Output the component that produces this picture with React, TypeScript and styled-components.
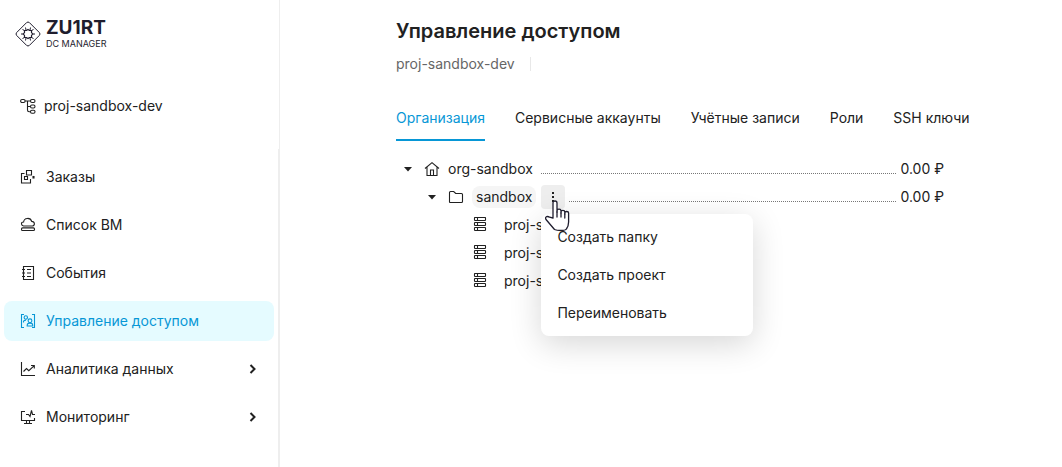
import React from "react";
import styled, { createGlobalStyle } from "styled-components";

const GlobalStyle = createGlobalStyle`
  * { box-sizing: border-box; }
  body {
    margin: 0;
    background: #fff;
    color: #212121;
    font-family: Inter, "Noto Sans", sans-serif;
    font-size: 14px;
    line-height: 20px;
  }
  button {
    margin: 0;
    padding: 0;
    border: 0;
    background: none;
    color: inherit;
    font: inherit;
    cursor: pointer;
  }
`;

const Page = styled.div`
  display: flex;
  min-height: 100vh;
`;

const Sidebar = styled.aside`
  display: flex;
  flex-direction: column;
  flex: 0 0 280px;
  border-right: 1px solid #eee;
`;

const Logo = styled.a`
  display: flex;
  align-items: center;
  gap: 5px;
  height: 68px;
  padding-left: 15px;
  color: #1f1d2e;
  text-decoration: none;
`;

const LogoText = styled.span`
  display: flex;
  flex-direction: column;
  gap: 2px;
`;

const LogoName = styled.span`
  font-size: 19px;
  font-weight: 700;
  line-height: 18px;
`;

const LogoProduct = styled.span`
  font-size: 9px;
  line-height: 10px;
`;

const ProjectButton = styled.button`
  display: flex;
  align-items: center;
  gap: 8px;
  height: 40px;
  margin: 18px 0 23px;
  padding: 0 20px;
`;

const Nav = styled.nav`
  display: flex;
  flex: 1;
  flex-direction: column;
  gap: 8px;
  padding: 8px 4px;
  border-right: 1px solid #eee;
`;

const NavLink = styled.a<{ $active?: boolean }>`
  display: flex;
  align-items: center;
  gap: 10px;
  height: 40px;
  padding: 0 16px;
  border-radius: 8px;
  background: ${(p) => (p.$active ? "#e5fbff" : "transparent")};
  color: ${(p) => (p.$active ? "#0797d6" : "inherit")};
  text-decoration: none;
`;

const NavLabel = styled.span`
  flex: 1;
`;

const Main = styled.main`
  flex: 1;
  min-width: 0;
  padding: 17px 90px 40px 116px;
`;

const Title = styled.h1`
  margin: 0;
  font-size: 20px;
  font-weight: 600;
  line-height: 28px;
`;

const Context = styled.div`
  display: flex;
  align-items: center;
  gap: 15px;
  margin-top: 9px;
  color: #666;
`;

const Divider = styled.span`
  width: 1px;
  height: 14px;
  background: #e8e8e8;
`;

const Tabs = styled.div`
  display: flex;
  gap: 30px;
  margin-top: 34px;
`;

const Tab = styled.button<{ $active?: boolean }>`
  height: 33px;
  padding-bottom: 11px;
  border-bottom: 2px solid ${(p) => (p.$active ? "#0797d6" : "transparent")};
  color: ${(p) => (p.$active ? "#0797d6" : "inherit")};
  white-space: nowrap;
`;

const Tree = styled.ul`
  max-width: 548px;
  margin: 14px 0 0;
  padding: 0;
  list-style: none;
`;

const Row = styled.li<{ $level: number }>`
  display: flex;
  align-items: center;
  height: 28px;
  padding-left: ${(p) => 4 + p.$level * 24}px;
`;

const Caret = styled.button`
  display: flex;
  margin-right: 8px;
`;

const NodeIcon = styled.span`
  display: flex;
  width: 24px;
  flex-shrink: 0;
`;

const NodeName = styled.span<{ $selected?: boolean }>`
  padding: ${(p) => (p.$selected ? "1px 4px" : "0")};
  border-radius: 8px;
  background: ${(p) => (p.$selected ? "#f5f5f5" : "transparent")};
  white-space: nowrap;
`;

const ProjectName = styled(NodeName)`
  margin-left: 8px;
`;

const Dots = styled.span`
  flex: 1;
  height: 9px;
  margin: 0 4px 0 8px;
  border-bottom: 1px dotted #777;
`;

const LeafDots = styled(Dots)`
  margin-left: 4px;
`;

const MenuAnchor = styled.span`
  position: relative;
  display: flex;
  margin-left: 5px;
`;

const MoreButton = styled.button`
  display: flex;
  align-items: center;
  justify-content: center;
  width: 24px;
  height: 24px;
  border-radius: 4px;
  background: #eee;
`;

const Menu = styled.div`
  position: absolute;
  z-index: 1;
  top: 29px;
  left: 0;
  display: flex;
  flex-direction: column;
  width: 212px;
  padding: 4px 0;
  border-radius: 8px;
  background: #fff;
  box-shadow: 0 8px 32px rgba(0, 0, 0, 0.16);
`;

const MenuItem = styled.button`
  height: 38px;
  padding: 0 16px;
  text-align: left;
`;

const Pointer = styled.svg`
  position: absolute;
  z-index: 2;
  top: 15px;
  left: 4px;
  pointer-events: none;
`;

const Icon = ({ children }: { children: React.ReactNode }) => (
  <svg width="16" height="16" viewBox="0 0 16 16" fill="none" stroke="currentColor" strokeWidth="1.1" aria-hidden="true">
    {children}
  </svg>
);

const OrdersIcon = () => (
  <Icon>
    <path d="M4.500 4.500H1.500v9.500h9V10M6.500 1.500h5v4.500h-5zM4.500 7.500h3v3h-3z" />
    <path d="M13 7.500h1v1.500h-1z" />
  </Icon>
);
const CloudIcon = () => (
  <Icon>
    <path d="M3.500 9C.7 8.500.8 5 3.600 5 4 .5 10.500.2 11.700 4.400 15 4.500 15.200 8.500 12.500 9zM2.500 10.900h11q1 0 1 1v.6q0 1-1 1h-11q-1 0-1-1v-.6q0-1 1-1z" />
  </Icon>
);
const EventsIcon = () => (
  <Icon>
    <path d="M3.500 1.500h10v13h-10zM2 4.500h3M2 8h3M2 11.500h3M7 4.500h4M7 8h4M7 11.500h4" />
  </Icon>
);
const AccessIcon = () => (
  <Icon>
    <path d="M4 1.500H1.500v13H4M12 1.500h2.500v13H12" />
    <circle cx="5.800" cy="4.500" r="1.700" />
    <circle cx="10" cy="7.800" r="1.900" />
    <path d="M3.500 9.500V8.400q.2-1.300 2.500-1.300M7.200 13v-1q.3-1.900 2.800-1.900t2.700 1.900v1z" />
  </Icon>
);
const AnalyticsIcon = () => (
  <Icon>
    <path d="M1.500 1v13.500H15M3.500 10.500l3-3 2.300 2.200L14 4.800M11 4.500h3.300v3" />
  </Icon>
);
const MonitorIcon = () => (
  <Icon>
    <path d="M5 2.500H1.500v9h13V9M6.500 11.500v3M9.500 11.500v3M4 14.500h8M6 5.500h2.500l1.500 2 1.500-6 1 4H15" />
  </Icon>
);
const HierarchyIcon = () => (
  <Icon>
    <rect x=".6" y="1.500" width="4.500" height="3" rx="1.400" />
    <rect x="10.500" y="1.500" width="4.500" height="3" rx="1.400" />
    <rect x="10.500" y="7" width="4.500" height="3" rx="1.400" />
    <rect x="10.500" y="12.200" width="4.500" height="3" rx="1.400" />
    <path d="M5 3h5.500M7.500 3v9q0 1.700 1.600 1.700h1.400M7.500 8.500h3" />
  </Icon>
);
const HomeIcon = () => (
  <Icon>
    <path d="M1 7.500 8 1.600l7 5.900M3 6v8.500h10V6M6.500 14.500V9h3v5.500" />
  </Icon>
);
const FolderIcon = () => (
  <Icon>
    <path d="M1.500 13V3.500q0-1 1-1h3.200l2 2h5.800q1 0 1 1v7q0 1-1 1H2q-.5 0-.5-.5z" />
  </Icon>
);
const ServerIcon = () => (
  <Icon>
    <rect x="2.500" y=".5" width="11" height="3" rx=".6" />
    <rect x="2.500" y="5.500" width="11" height="3" rx=".6" />
    <rect x="2.500" y="10.500" width="11" height="3" rx=".6" />
    <path d="M5.500.5v3M5.500 5.500v3M5.500 10.500v3" />
  </Icon>
);
const ChevronIcon = () => (
  <svg width="10" height="10" viewBox="0 0 10 10" fill="none" stroke="currentColor" strokeWidth="2" aria-hidden="true">
    <path d="m2.500 1 4 4-4 4" />
  </svg>
);
const CaretIcon = () => (
  <svg width="16" height="16" viewBox="0 0 16 16" fill="currentColor" aria-hidden="true">
    <path d="M4 6h8l-4 4.500z" />
  </svg>
);

const LogoMark = () => (
  <svg width="26" height="26" viewBox="0 0 26 26" fill="none" stroke="currentColor" aria-hidden="true">
    <path d="M11.600 1.600q1.400-1.200 2.800 0l10 10q1.200 1.400 0 2.800l-10 10q-1.400 1.200-2.800 0l-10-10q-1.200-1.400 0-2.800z" />
    <path d="m13 8.500 1.500 1h2v2l1.200 1.500-1.200 1.500v2h-2l-1.500 1-1.500-1h-2v-2L8.300 13l1.200-1.500v-2h2z" strokeWidth="1.200" />
    <path d="m9.500 9.500-2-1M16.500 9.500l2-1M9.500 16.500l-2 1M16.500 16.500l2 1M11 9l-.5-2.500M15 9l.5-2.500M11 17l-.5 2.500M15 17l.5 2.500M6 13h2M18 13h2" />
  </svg>
);

const navItems = [
  { label: "Заказы", icon: <OrdersIcon /> },
  { label: "Список ВМ", icon: <CloudIcon /> },
  { label: "События", icon: <EventsIcon /> },
  { label: "Управление доступом", icon: <AccessIcon />, active: true },
  { label: "Аналитика данных", icon: <AnalyticsIcon />, expandable: true },
  { label: "Мониторинг", icon: <MonitorIcon />, expandable: true },
];

const tabs = ["Организация", "Сервисные аккаунты", "Учётные записи", "Роли", "SSH ключи"];
const projects = [1, 2, 3];

export default function App() {
  return (
    <Page>
      <GlobalStyle />
      <Sidebar>
        <Logo href="#">
          <LogoMark />
          <LogoText>
            <LogoName>ZU1RT</LogoName>
            <LogoProduct>DC MANAGER</LogoProduct>
          </LogoText>
        </Logo>
        <ProjectButton>
          <HierarchyIcon />
          proj-sandbox-dev
        </ProjectButton>
        <Nav>
          {navItems.map((item) => (
            <NavLink key={item.label} href="#" $active={item.active}>
              {item.icon}
              <NavLabel>{item.label}</NavLabel>
              {item.expandable && <ChevronIcon />}
            </NavLink>
          ))}
        </Nav>
      </Sidebar>
      <Main>
        <Title>Управление доступом</Title>
        <Context>
          proj-sandbox-dev
          <Divider />
        </Context>
        <Tabs role="tablist">
          {tabs.map((tab, i) => (
            <Tab key={tab} role="tab" aria-selected={i === 0} $active={i === 0}>
              {tab}
            </Tab>
          ))}
        </Tabs>
        <Tree>
          <Row $level={0}>
            <Caret aria-label="org-sandbox">
              <CaretIcon />
            </Caret>
            <NodeIcon>
              <HomeIcon />
            </NodeIcon>
            <NodeName>org-sandbox</NodeName>
            <Dots />
            <span>0.00 ₽</span>
          </Row>
          <Row $level={1}>
            <Caret aria-label="sandbox">
              <CaretIcon />
            </Caret>
            <NodeIcon>
              <FolderIcon />
            </NodeIcon>
            <NodeName $selected>sandbox</NodeName>
            <MenuAnchor>
              <MoreButton aria-haspopup="menu" aria-expanded="true" aria-label="sandbox">
                <svg width="4" height="14" viewBox="0 0 4 14" fill="currentColor" aria-hidden="true">
                  <path d="M1 2h2v2H1zM1 6h2v2H1zM1 10h2v2H1z" />
                </svg>
              </MoreButton>
              <Menu role="menu">
                <MenuItem role="menuitem">Создать папку</MenuItem>
                <MenuItem role="menuitem">Создать проект</MenuItem>
                <MenuItem role="menuitem">Переименовать</MenuItem>
              </Menu>
              <Pointer width="26" height="33" viewBox="0 0 26 33" fill="#fff" stroke="#1f1d2e" strokeWidth="1.300" strokeLinejoin="round" strokeLinecap="round">
                <path d="M8 18V3q0-2 2-2t2 2v9-1q0-1.800 2-1.800t2 1.800v2-1q0-1.700 1.900-1.700t1.900 1.700v2-1q0-1.500 1.900-1.500t1.900 1.500v9q0 4-2.200 7-1 1.500-5.400 1.500T9.500 29.500L1 19.500q-1-2 .5-2.800 1.500-.6 3 .5z" />
                <path d="M12 12v5M16 13v4M19.800 14v4" />
              </Pointer>
            </MenuAnchor>
            <LeafDots />
            <span>0.00 ₽</span>
          </Row>
          {projects.map((id) => (
            <Row key={id} $level={3}>
              <NodeIcon>
                <ServerIcon />
              </NodeIcon>
              <ProjectName>proj-s</ProjectName>
            </Row>
          ))}
        </Tree>
      </Main>
    </Page>
  );
}
